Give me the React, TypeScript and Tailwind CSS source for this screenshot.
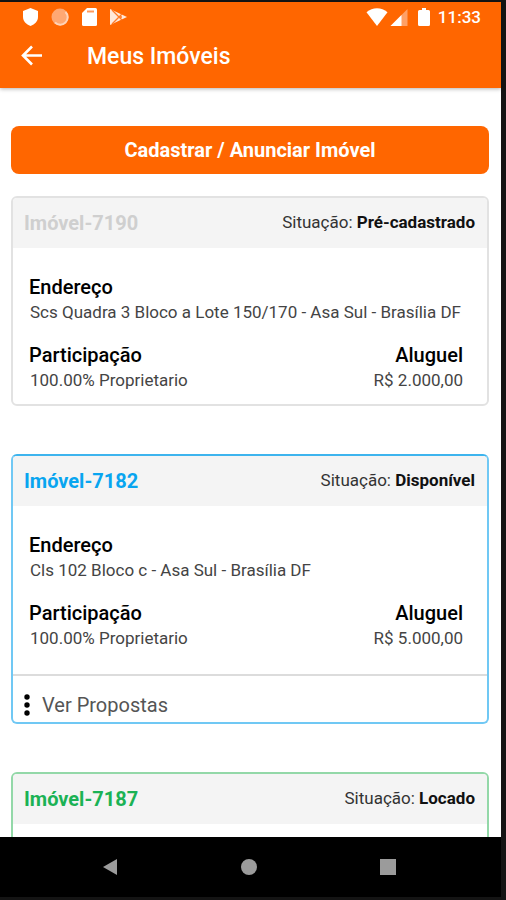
import React from "react";
import clsx from "clsx";

type Imovel = {
  id: number;
  situacao: string;
  endereco?: string;
  participacao?: string;
  aluguel?: string;
  border: string;
  title: string;
  propostas?: boolean;
};

const imoveis: Imovel[] = [
  {
    id: 7190,
    situacao: "Pré-cadastrado",
    endereco: "Scs Quadra 3 Bloco a Lote 150/170 - Asa Sul - Brasília DF",
    participacao: "100.00% Proprietario",
    aluguel: "R$ 2.000,00",
    border: "border-[#e2e2e2]",
    title: "text-[#cfcfcf]",
  },
  {
    id: 7182,
    situacao: "Disponível",
    endereco: "Cls 102 Bloco c - Asa Sul - Brasília DF",
    participacao: "100.00% Proprietario",
    aluguel: "R$ 5.000,00",
    border: "border-[#70c8f4] border-t-[#3db4ee]",
    title: "text-[#08a5f0]",
    propostas: true,
  },
  {
    id: 7187,
    situacao: "Locado",
    border: "border-[#93d8a8]",
    title: "text-[#1bb255]",
  },
];

const StatusBar = () => (
  <div className="flex items-center justify-between pl-[22px] pr-5 pt-1.5">
    <div className="flex items-center gap-3">
      <svg className="w-[17px] h-[18px]" viewBox="0 0 17 18" fill="#fff">
        <path d="M8.5 0 16 3v6c0 4-3.2 7.500-7.500 9C4.200 16.500 1 13 1 9V3z" />
      </svg>
      <svg className="w-[18px] h-[18px]" viewBox="0 0 18 18">
        <circle cx="9" cy="9" r="8.500" fill="#ffa873" />
        <path
          d="M14.500 4a7.300 7.300 0 0 1-10.500 10.500"
          fill="none"
          stroke="#ffd3b8"
          strokeWidth="2"
        />
      </svg>
      <svg className="w-[17px] h-[18px]" viewBox="0 0 17 18">
        <path
          d="M6 0h8.500A1.500 1.500 0 0 1 16 1.500v15a1.500 1.500 0 0 1-1.500 1.500h-12A1.500 1.500 0 0 1 1 16.500V5z"
          fill="#fff"
        />
        <path d="M6 3.500h7" stroke="#ff9a5c" strokeWidth="2" />
      </svg>
      <svg className="w-[18px] h-[18px]" viewBox="0 0 18 18">
        <path d="M0 1v16L17 9z" fill="#ffe9dc" />
        <path
          d="M2 2l10 10M2 16 12 6M9 9h3"
          stroke="#ff7a26"
          strokeWidth="1.300"
          fill="none"
        />
      </svg>
    </div>
    <div className="flex items-center text-white">
      <svg className="w-[22px] h-[18px]" viewBox="0 0 22 18" fill="#fff">
        <path d="M11 18 .5 4.200C6.500-1 15.500-1 21.500 4.200z" />
      </svg>
      <svg className="w-[18px] h-[18px] ml-0.5" viewBox="0 0 18 18">
        <path d="M17.500 1v17H.5z" fill="#ffa066" />
        <path d="M11.500 7v11H.5z" fill="#fff" />
      </svg>
      <svg className="w-3 h-[18px] ml-2.5" viewBox="0 0 12 18" fill="#fff">
        <path d="M4 0h4v2h2.500A1.500 1.500 0 0 1 12 3.500v13a1.500 1.500 0 0 1-1.500 1.500h-9A1.500 1.500 0 0 1 0 16.500v-13A1.500 1.500 0 0 1 1.500 2H4z" />
      </svg>
      <span className="ml-2 text-[17px] leading-[18px] font-medium">11:33</span>
    </div>
  </div>
);

const ImovelCard = ({ imovel }: { imovel: Imovel }) => (
  <article
    className={clsx(
      imovel.border,
      "shrink-0 min-h-[200px] border-2 rounded-md overflow-hidden bg-white"
    )}
  >
    <div className="flex items-center justify-between h-[50px] bg-[#f4f4f4] pl-[11px] pr-3">
      <h2 className={clsx(imovel.title, "text-xl font-bold")}>
        Imóvel-{imovel.id}
      </h2>
      <p className="text-[17px] text-[#333]">
        Situação: <b className="text-[#111]">{imovel.situacao}</b>
      </p>
    </div>
    {imovel.endereco && (
      <div className="px-4 pt-[26px] pb-3">
        <h3 className="text-xl leading-[26px] font-medium text-black">
          Endereço
        </h3>
        <p className="pl-px text-[17px] leading-6 text-[#444] whitespace-nowrap">
          {imovel.endereco}
        </p>
        <div className="flex justify-between mt-[18px] pr-2">
          <div>
            <h3 className="text-xl leading-[26px] font-medium text-black">
              Participação
            </h3>
            <p className="pl-px text-[17px] leading-6 text-[#444]">
              {imovel.participacao}
            </p>
          </div>
          <div className="text-right">
            <h3 className="text-xl leading-[26px] font-medium text-black">
              Aluguel
            </h3>
            <p className="text-[17px] leading-6 text-[#444]">
              {imovel.aluguel}
            </p>
          </div>
        </div>
      </div>
    )}
    {imovel.propostas && (
      <button
        type="button"
        className="flex items-center w-full mt-3 pl-[11px] pt-3 border-t-2 border-[#dcdcdc] text-xl leading-[34px] text-[#555]"
      >
        <svg className="w-1.5 h-[22px] mr-3" viewBox="0 0 6 22">
          <circle cx="3" cy="3" r="2.700" />
          <circle cx="3" cy="11" r="2.700" />
          <circle cx="3" cy="19" r="2.700" />
        </svg>
        Ver Propostas
      </button>
    )}
  </article>
);

const App = () => {
  return (
    <div className="flex flex-col h-screen overflow-hidden bg-[#141414] pt-0.5 pr-[5px] pb-[3px] font-[Roboto,sans-serif]">
      <header className="relative shrink-0 h-[86px] bg-[#ff6600] shadow-[0_1px_4px_rgba(0,0,0,0.3)]">
        <StatusBar />
        <div className="flex items-center h-[60px] pl-[21px] text-white">
          <button type="button" aria-label="Voltar">
            <svg
              className="w-[22px] h-[22px]"
              viewBox="0 0 22 22"
              fill="none"
              stroke="#fff"
              strokeWidth="2.600"
            >
              <path d="M21 10.500H2.500M11 1.500 2 10.500l9 9" />
            </svg>
          </button>
          <h1 className="ml-11 pt-0.5 text-[23px] font-medium">
            Meus Imóveis
          </h1>
        </div>
      </header>
      <main className="flex flex-col flex-1 min-h-0 overflow-hidden bg-white pl-[11px] pr-3 pt-[38px]">
        <button
          type="button"
          className="shrink-0 h-12 mb-[22px] rounded-lg bg-[#ff6600] text-white text-xl font-bold"
        >
          Cadastrar / Anunciar Imóvel
        </button>
        <div className="flex flex-col gap-12">
          {imoveis.map((imovel) => (
            <ImovelCard key={imovel.id} imovel={imovel} />
          ))}
        </div>
      </main>
      <nav className="flex shrink-0 items-center justify-around h-[60px] bg-black pl-10 pr-11">
        <button type="button" aria-label="Voltar">
          <svg className="w-4 h-4" viewBox="0 0 16 16" fill="#9b9b9b">
            <path d="M15 0v16L1 8z" />
          </svg>
        </button>
        <button type="button" aria-label="Início">
          <svg className="w-4 h-4" viewBox="0 0 16 16" fill="#9b9b9b">
            <circle cx="8" cy="8" r="8" />
          </svg>
        </button>
        <button type="button" aria-label="Recentes">
          <svg className="w-4 h-4" viewBox="0 0 16 16" fill="#9b9b9b">
            <path d="M0 0h16v16H0z" />
          </svg>
        </button>
      </nav>
    </div>
  );
};

export default App;
